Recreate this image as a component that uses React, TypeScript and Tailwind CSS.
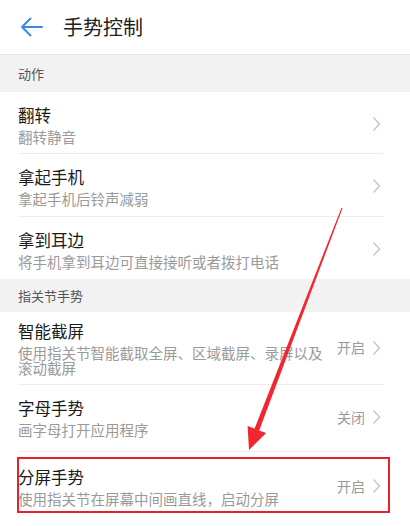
import React from 'react';

type Item = {
  title: string;
  desc: string;
  value?: string;
  pt?: string;
  pb?: string;
};

const actions: Item[] = [
  { title: '翻转', desc: '翻转静音', pb: 'pb-[9px]' },
  { title: '拿起手机', desc: '拿起手机后铃声减弱' },
  { title: '拿到耳边', desc: '将手机拿到耳边可直接接听或者拨打电话' },
];

const knuckles: Item[] = [
  {
    title: '智能截屏',
    desc: '使用指关节智能截取全屏、区域截屏、录屏以及滚动截屏',
    value: '开启',
    pt: 'pt-[8px]',
    pb: 'pb-[9px]',
  },
  { title: '字母手势', desc: '画字母打开应用程序', value: '关闭', pb: 'pb-[14px]' },
  { title: '分屏手势', desc: '使用指关节在屏幕中间画直线，启动分屏', value: '开启', pt: 'pt-[14px]' },
];

function Chevron() {
  return (
    <svg width="9" height="16" viewBox="0 0 9 16" className="shrink-0 mr-[2px]">
      <path d="M1.5 1.5 L7.5 8 L1.5 14.5" fill="none" stroke="#c6c6c6" strokeWidth="1.4" />
    </svg>
  );
}

function SectionHeader({ label, tall }: { label: string; tall?: boolean }) {
  return (
    <div className={`bg-[#f2f2f2] pl-[18px] flex items-center text-[13px] text-[#555] ${tall ? 'h-[37px]' : 'h-[33px]'}`}>
      {label}
    </div>
  );
}

function Row({ item, last }: { item: Item; last?: boolean }) {
  return (
    <div className="pl-[18px] pr-[27px]">
      <div
        className={`flex items-center ${item.pt ?? 'pt-[12px]'} ${item.pb ?? 'pb-[10px]'} ${last ? '' : 'border-b border-[#ececec]'}`}
      >
        <div className="flex-1 min-w-0">
          <div className="text-[16.5px] leading-[22px] text-[#1a1a1a]">{item.title}</div>
          <div className="mt-[3px] max-w-[312px] text-[14.5px] leading-[15px] text-[#9a9a9a]">{item.desc}</div>
        </div>
        {item.value && <span className="ml-[10px] text-[14px] text-[#9a9a9a] mr-[7px]">{item.value}</span>}
        <Chevron />
      </div>
    </div>
  );
}

export default function App() {
  return (
    <div
      className="relative w-[410px] h-[526px] overflow-hidden bg-white"
      style={{ fontFamily: '"Noto Sans CJK SC", "Noto Sans", sans-serif' }}
    >
      <header className="h-[55px] flex items-center border-b border-[#e6e6e6]">
        <svg width="24" height="22" viewBox="0 0 24 22" className="ml-[20px]">
          <path d="M22 11 H2.5 M10.5 2.5 L2 11 L10.5 19.5" fill="none" stroke="#3b8ae6" strokeWidth="2" strokeLinecap="round" strokeLinejoin="round" />
        </svg>
        <h1 className="ml-[19px] text-[20px] text-[#222]">手势控制</h1>
      </header>

      <SectionHeader label="动作" tall />
      {actions.map((it, i) => (
        <Row key={it.title} item={it} last={i === actions.length - 1} />
      ))}

      <SectionHeader label="指关节手势" />
      {knuckles.map((it, i) => (
        <Row key={it.title} item={it} last={i === knuckles.length - 1} />
      ))}

      {/* red annotation overlay */}
      <svg className="absolute inset-0 pointer-events-none" width="410" height="526" viewBox="0 0 410 526">
        <polygon
          points="342.5,208.2 341.5,207.8 254.6,428.6 247.6,425.9 249,450 266.2,433.1 259.2,430.4"
          fill="#f2262f"
        />
        <rect x="18" y="458" width="371" height="54" fill="none" stroke="#e8202c" strokeWidth="2" />
      </svg>
    </div>
  );
}
